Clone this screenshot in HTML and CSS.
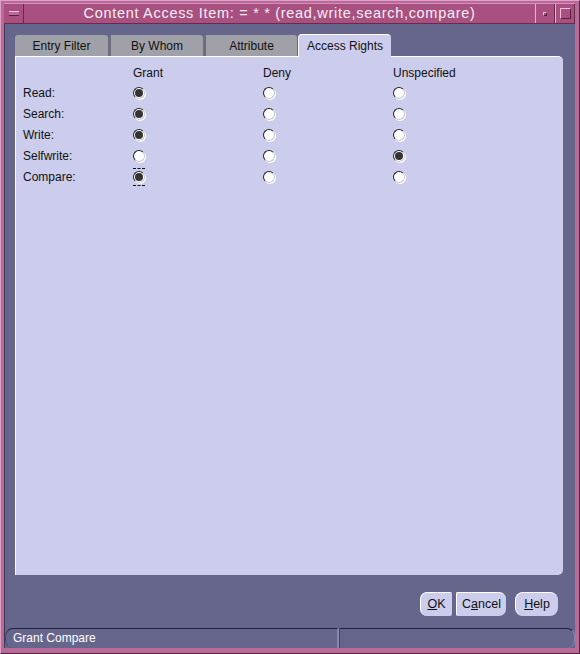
FILE: index.html
```html
<!DOCTYPE html>
<html>
<head>
<meta charset="utf-8">
<link rel="stylesheet" href="styles.css">
</head>
<body>
<div class="window">
  <div class="titlebar">
    <div class="tbtn tbtn-left"><span class="dash"></span></div>
    <div class="title">Content Access Item: = * * (read,write,search,compare)</div>
    <div class="tbtn"><span class="dot"></span></div>
    <div class="tbtn"><span class="square"></span></div>
  </div>
  <div class="content">
    <div class="tabs">
      <div class="tab">Entry Filter</div>
      <div class="tab">By Whom</div>
      <div class="tab">Attribute</div>
      <div class="tab active">Access Rights</div>
    </div>
    <div class="panel">
      <div class="grid">
        <div></div><div class="head">Grant</div><div class="head">Deny</div><div class="head">Unspecified</div>
        <div class="lbl">Read:</div><div class="cell"><span class="radio on"></span></div><div class="cell"><span class="radio"></span></div><div class="cell"><span class="radio"></span></div>
        <div class="lbl">Search:</div><div class="cell"><span class="radio on"></span></div><div class="cell"><span class="radio"></span></div><div class="cell"><span class="radio"></span></div>
        <div class="lbl">Write:</div><div class="cell"><span class="radio on"></span></div><div class="cell"><span class="radio"></span></div><div class="cell"><span class="radio"></span></div>
        <div class="lbl">Selfwrite:</div><div class="cell"><span class="radio"></span></div><div class="cell"><span class="radio"></span></div><div class="cell"><span class="radio on"></span></div>
        <div class="lbl">Compare:</div><div class="cell"><span class="focus"><span class="radio on"></span></span></div><div class="cell"><span class="radio"></span></div><div class="cell"><span class="radio"></span></div>
      </div>
    </div>
    <div class="buttons">
      <div class="btn btn-ok"><u>O</u>K</div>
      <div class="btn btn-cancel">C<u>a</u>ncel</div>
      <div class="btn btn-help"><u>H</u>elp</div>
    </div>
  </div>
  <div class="status">
    <div class="status-left">Grant Compare</div>
    <div class="status-right"></div>
  </div>
</div>
</body>
</html>
```

FILE: styles.css
```css
html, body {
  margin: 0;
  padding: 0;
  background: #b86a98;
}
body {
  font-family: "Liberation Sans", Arial, sans-serif;
  font-size: 12px;
  color: #111;
}
.window {
  width: 580px;
  height: 654px;
  box-sizing: border-box;
  background: #b86a98;
  border-top: 1px solid #e0a0c8;
  border-left: 1px solid #e0a0c8;
  border-right: 1px solid #5a2040;
  border-bottom: 1px solid #5a2040;
  padding: 2px 4px 5px 3px;
  display: flex;
  flex-direction: column;
}
.titlebar {
  height: 21px;
  display: flex;
  background: #a8507f;
  border-top: 1px solid #d890b8;
  border-bottom: 1px solid #6a2a4a;
  box-sizing: border-box;
}
.tbtn {
  width: 20px;
  height: 100%;
  box-sizing: border-box;
  border-left: 1px solid #e8b0d0;
  border-right: 1px solid #6a2a4a;
  display: flex;
  align-items: center;
  justify-content: center;
}
.tbtn-left {
  border-left: none;
}
.dash {
  width: 10px;
  height: 3px;
  border-top: 1px solid #f0c0dc;
  border-bottom: 1px solid #5a2040;
  background: #b86a98;
}
.dot {
  width: 2px;
  height: 2px;
  border-top: 1px solid #f0c0dc;
  border-left: 1px solid #f0c0dc;
  border-right: 1px solid #5a2040;
  border-bottom: 1px solid #5a2040;
}
.square {
  width: 9px;
  height: 9px;
  border-top: 1px solid #f0c0dc;
  border-left: 1px solid #f0c0dc;
  border-right: 1px solid #5a2040;
  border-bottom: 1px solid #5a2040;
}
.title {
  flex: 1;
  text-align: center;
  color: #f4eef4;
  font-size: 14.5px;
  letter-spacing: 0.7px;
  line-height: 19px;
}
.content {
  flex: 1;
  background: #66668c;
  border-left: 1px solid #3a3a55;
  padding: 10px 11px 11px 10px;
  display: flex;
  flex-direction: column;
}
.tabs {
  display: flex;
  height: 22px;
  align-items: flex-end;
}
.tab {
  width: 93px;
  height: 21px;
  box-sizing: border-box;
  background: #a0a0a8;
  border-left: 3px solid #6e6e80;
  border-top-left-radius: 3px;
  border-top-right-radius: 3px;
  text-align: center;
  line-height: 22px;
  color: #111;
}
.tab:first-child {
  border-left: none;
  width: 93px;
}
.tab:nth-child(2) { width: 95px; }
.tab:nth-child(3) { width: 94px; }
.tab.active {
  width: 93px;
  height: 23px;
  background: #ccccec;
  border-left: 1px solid #ffffff;
  border-top: 1px solid #ffffff;
  border-top-left-radius: 4px;
  border-top-right-radius: 4px;
  line-height: 22px;
  margin-bottom: -1px;
  margin-left: 1px;
  position: relative;
}
.panel {
  height: 519px;
  width: 548px;
  box-sizing: border-box;
  background: #ccccec;
  border-top: 1px solid #ffffff;
  border-left: 1px solid #ffffff;
  border-top-right-radius: 5px;
  border-bottom-right-radius: 5px;
  padding: 6px 0 0 7px;
}
.grid {
  display: grid;
  grid-template-columns: 110px 130px 130px 1fr;
  grid-template-rows: 20px repeat(5, 20.8px);
}
.head, .lbl, .cell {
  display: flex;
  align-items: center;
}
.radio {
  display: inline-block;
  width: 10px;
  height: 10px;
  border-radius: 50%;
  background: #fff;
  border: 1px solid #c8c8c8;
  border-top-color: #222;
  border-left-color: #222;
  box-shadow: 1px 1px 0 #fff;
  position: relative;
}
.radio.on::after {
  content: "";
  position: absolute;
  left: 1px;
  top: 1px;
  width: 8px;
  height: 8px;
  border-radius: 50%;
  background: #333;
}
.focus {
  display: inline-flex;
  padding: 2px 0;
  border-top: 1px dashed #111;
  border-bottom: 1px dashed #111;
}
.buttons {
  display: flex;
  justify-content: flex-end;
  padding-right: 6px;
  margin-top: 17px;
  height: 24px;
}
.btn {
  height: 24px;
  box-sizing: border-box;
  background: #ccccec;
  border-top: 1px solid #fff;
  border-left: 1px solid #fff;
  line-height: 22px;
  text-align: center;
  color: #111;
  font-size: 12.5px;
}
.btn-ok {
  width: 32px;
  border-radius: 7px 2px 2px 7px;
}
.btn-cancel {
  width: 50px;
  margin-left: 4px;
  border-radius: 2px 7px 7px 2px;
}
.btn-help {
  width: 43px;
  margin-left: 9px;
  border-radius: 8px;
}
.status {
  height: 20px;
  display: flex;
  background: #66668c;
  border-left: 1px solid #3a3a55;
}
.status-left {
  width: 334px;
  box-sizing: border-box;
  border-top: 1px solid #222240;
  border-left: 1px solid #444466;
  border-right: 2px solid #8888aa;
  border-top-left-radius: 8px;
  border-bottom-left-radius: 8px;
  color: #fff;
  padding-left: 7px;
  line-height: 18px;
}
.status-right {
  flex: 1;
  border-top: 1px solid #222240;
  border-left: 1px solid #444466;
  border-top-right-radius: 8px;
  border-bottom-right-radius: 8px;
  border-right: 1px solid #8888aa;
}
```
